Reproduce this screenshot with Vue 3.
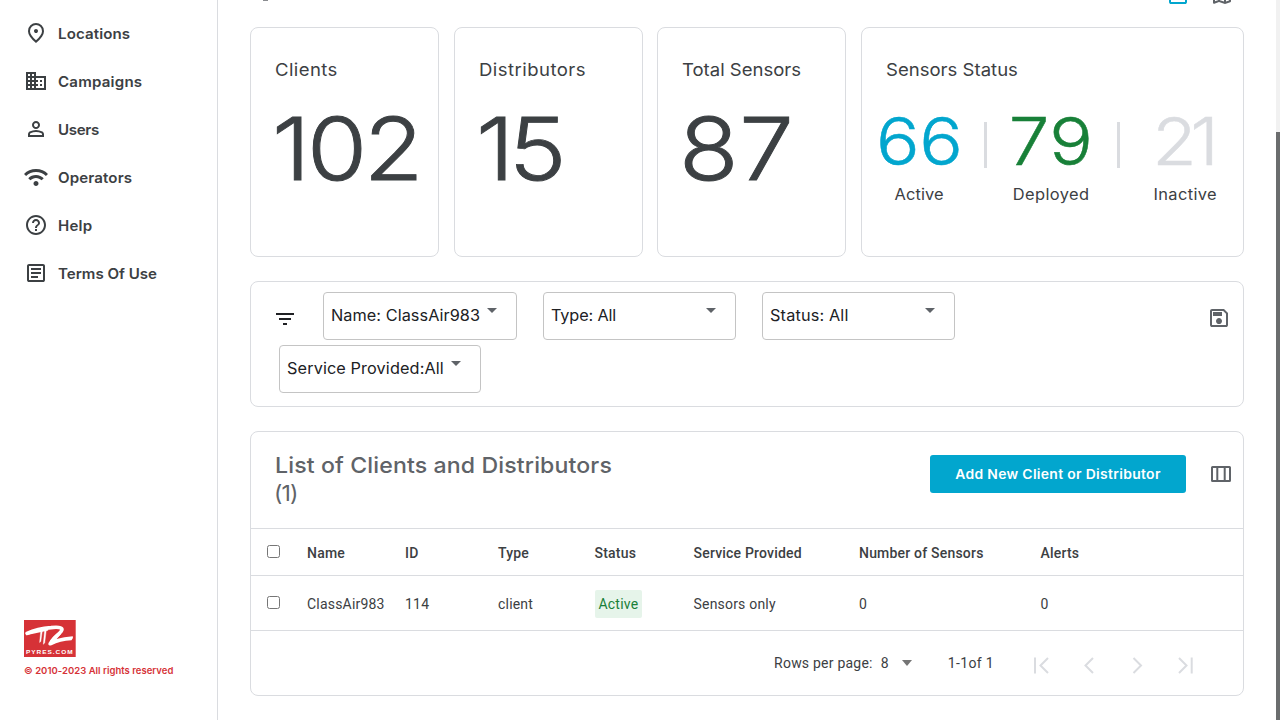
<script setup>
const nav = [
  { label: 'Locations', spacing: 0.1, icon: 'M12 12q.825 0 1.4-.6T14 10t-.6-1.4T12 8t-1.4.6T10 10t.6 1.4T12 12zm0 7.35q3.05-2.8 4.525-5.09T18 10.2q0-2.725-1.74-4.46T12 4 7.74 5.74 6 10.2q0 1.77 1.475 4.06T12 19.35zM12 22q-4.025-3.425-6.01-6.36T4 10.2q0-3.75 2.41-5.975T12 2t5.59 2.225T20 10.2q0 2.5-1.99 5.44T12 22z' },
  { label: 'Campaigns', spacing: 0.2, icon: 'M12 7V3H2v18h20V7H12zM6 19H4v-2h2v2zm0-4H4v-2h2v2zm0-4H4V9h2v2zm0-4H4V5h2v2zm4 12H8v-2h2v2zm0-4H8v-2h2v2zm0-4H8V9h2v2zm0-4H8V5h2v2zm10 12h-8v-2h2v-2h-2v-2h2v-2h-2V9h8v10zm-2-8h-2v2h2v-2zm0 4h-2v2h2v-2z' },
  { label: 'Users', spacing: -0.3, icon: 'M12 12q-1.65 0-2.825-1.175T8 8t1.175-2.825T12 4t2.825 1.175T16 8t-1.175 2.825T12 12zm-8 8v-2.8q0-.85.44-1.56t1.16-1.09q1.55-.775 3.15-1.16T12 13t3.25.39 3.15 1.16q.725.375 1.16 1.09T20 17.2V20H4zm2-2h12v-.8q0-.275-.14-.5t-.36-.35q-1.35-.675-2.725-1.01T12 15t-2.775.34T6.5 16.35q-.225.125-.36.35T6 17.2v.8zm6-8q.825 0 1.41-.59T14 8t-.59-1.41T12 6t-1.41.59T10 8t.59 1.41T12 10z' },
  { label: 'Operators', spacing: 0.12, icon: 'M12 21q-1.05 0-1.775-.725T9.5 18.5t.725-1.775T12 16t1.775.725.725 1.775-.725 1.775T12 21zm-5.65-5.65-2.1-2.15q1.475-1.475 3.46-2.34T12 10t4.29.875 3.46 2.375l-2.1 2.1q-1.1-1.1-2.55-1.725T12 13t-3.1.625-2.55 1.725zM2.1 11.1 0 9q2.3-2.35 5.375-3.675T12 4t6.625 1.325T24 9l-2.1 2.1q-1.925-1.925-4.46-3.01T12 7 6.56 8.09 2.1 11.1z' },
  { label: 'Help', spacing: 0.2, icon: 'M11 18h2v-2h-2v2zm1-16C6.48 2 2 6.48 2 12s4.48 10 10 10 10-4.48 10-10S17.52 2 12 2zm0 18c-4.41 0-8-3.59-8-8s3.59-8 8-8 8 3.59 8 8-3.59 8-8 8zm0-14c-2.21 0-4 1.79-4 4h2c0-1.1.9-2 2-2s2 .9 2 2c0 2-3 1.75-3 5h2c0-2.25 3-2.5 3-5 0-2.21-1.79-4-4-4z' },
  { label: 'Terms Of Use', spacing: 0, icon: 'M7 17h7v-2H7v2zm0-4h10v-2H7v2zm0-4h10V7H7v2zM5 21q-.825 0-1.41-.59T3 19V5q0-.825.59-1.41T5 3h14q.825 0 1.41.59T21 5v14q0 .825-.59 1.41T19 21H5zm0-2h14V5H5v14z' },
]
const totals = [
  { label: 'Clients', value: '102', labelSpacing: 0.36, spacing: -3 },
  { label: 'Distributors', value: '15', labelSpacing: 0.42, spacing: -5 },
  { label: 'Total Sensors', value: '87', labelSpacing: -0.02, spacing: 0.5 },
]
const statuses = [
  { label: 'Active', value: '66', kind: 'active', spacing: -0.5, labelSpacing: 0.1 },
  { label: 'Deployed', value: '79', kind: 'deployed', spacing: 0.5, labelSpacing: 0.35 },
  { label: 'Inactive', value: '21', kind: 'inactive', spacing: -6, labelSpacing: 0.35 },
]
const filters = [
  { label: 'Name: ClassAir983', spacing: 0.05, kind: 'by-name' },
  { label: 'Type: All', spacing: -0.15, kind: 'by-type' },
  { label: 'Status: All', spacing: 0.14, kind: 'by-status' },
  { label: 'Service Provided:All', spacing: 0.1, kind: 'by-service' },
]
const columns = ['Name', 'ID', 'Type', 'Status', 'Service Provided', 'Number of Sensors', 'Alerts']
const pager = [
  'M6 4.500v16M19 5 11.500 12.500 19 20',
  'M16 5 8.500 12.500 16 20',
  'M8.500 5 16 12.500 8.500 20',
  'M6 5 13.500 12.500 6 20M18.700 4.500v16',
]
const track = (n) => ({ letterSpacing: n + 'px' })
</script>

<template>
  <div class="app">
    <aside class="sidebar">
      <nav>
        <a v-for="n in nav" :key="n.label" class="nav-item">
          <svg viewBox="0 0 24 24"><path :d="n.icon" /></svg>
          <span :style="track(n.spacing)">{{ n.label }}</span>
        </a>
      </nav>
      <footer>
        <svg class="logo" viewBox="0 0 52 37">
          <rect width="51.700" height="37" fill="#d63237" />
          <path d="M3 13.300C9 10.600 19 8.200 27 7.600C33 7 38 7.200 38 9.400C38 12 31 16.500 28 21" fill="none" stroke="#fff" stroke-width="3.600" stroke-linecap="round" stroke-linejoin="round" />
          <path d="M2 14.300 24 9.600" stroke="#fff" stroke-width="2" />
          <path d="M16.800 10.500 15.600 22.500 16.800 21.500 18.400 10.500zM20.600 10 19.300 24.300 20.700 23 22.300 10z" fill="#fff" stroke="#fff" stroke-width=".4" />
          <path d="M24.500 23Q28 17 34.500 12.500L37 14 32.500 19Q40 16.600 48.800 16.200Q49.800 18.500 47.500 20.300Q36 21 27.500 25.200Q23.600 26.300 24.500 23z" fill="#fff" />
          <text x="2" y="34.400" textLength="47.500" lengthAdjust="spacingAndGlyphs" letter-spacing="0.800" font-family="Liberation Sans, sans-serif" font-weight="700" font-size="5.400" fill="#fff">PYRES.COM</text>
        </svg>
        <p>© 2010-2023 All rights reserved</p>
      </footer>
    </aside>

    <main>
      <header class="top">
        <i class="tail"></i>
        <div class="views">
          <svg viewBox="0 0 24 24" class="on"><path d="M5 21q-.825 0-1.400-.6T3 19V5q0-.8.600-1.400T5 3h14q.8 0 1.400.6T21 5v14q0 .8-.6 1.400T19 21H5zm0-2h14v-8H5v8z" /></svg>
          <svg viewBox="0 0 24 24"><path d="m15 21-6-2.100-4.650 1.800q-.5.200-.925-.11T3 19.750v-14q0-.325.190-.575t.51-.375L9 3l6 2.100 4.650-1.800q.5-.2.925.11T21 4.250v14q0 .325-.19.575t-.51.375L15 21zm-1-2.450V6.850l-4-1.400v11.700l4 1.400zm2 0 3-1V5.700l-3 1.150v11.700zM5 18.300l3-1.150V5.450l-3 1v11.850z" /></svg>
        </div>
      </header>

      <section class="cards">
        <article v-for="t in totals" :key="t.label" class="card">
          <h3 :style="track(t.labelSpacing)">{{ t.label }}</h3>
          <div class="total" :style="track(t.spacing)">{{ t.value }}</div>
        </article>
        <article class="card">
          <h3>Sensors Status</h3>
          <div class="statuses">
            <div v-for="s in statuses" :key="s.label" class="status" :class="s.kind">
              <b :style="track(s.spacing)">{{ s.value }}</b>
              <span :style="track(s.labelSpacing)">{{ s.label }}</span>
            </div>
          </div>
        </article>
      </section>

      <section class="panel filters">
        <div class="filter-list">
          <svg class="filter-icon" viewBox="0 0 24 24"><path d="M10 18h4v-2h-4v2zM3 6v2h18V6H3zm3 7h12v-2H6v2z" /></svg>
          <div v-for="f in filters" :key="f.label" class="select" :class="f.kind">
            <span :style="track(f.spacing)">{{ f.label }}</span>
            <i></i>
          </div>
        </div>
        <svg class="save" viewBox="0 0 24 24"><path d="M21 7v12q0 .825-.59 1.410T19 21H5q-.825 0-1.410-.59T3 19V5q0-.825.59-1.410T5 3h12l4 4zm-2 .85L16.150 5H5v14h14V7.850zM12 18q1.250 0 2.125-.875T15 15t-.875-2.125T12 12t-2.125.875T9 15t.875 2.125T12 18zM6 10h9V6H6v4z" /></svg>
      </section>

      <section class="panel list">
        <header>
          <h2><div>List of Clients and Distributors</div><div class="count">(1)</div></h2>
          <button><span>Add New Client or Distributor</span></button>
          <svg viewBox="0 0 24 24"><path d="M2 18.500V5.500Q2 4 3.500 4h17Q22 4 22 5.500v13Q22 20 20.500 20h-17Q2 20 2 18.500zM4 18h3.300V6H4zM9.300 18h5.400V6H9.300zM16.700 18H20V6h-3.300z" /></svg>
        </header>
        <div class="row head">
          <input type="checkbox" />
          <span v-for="c in columns" :key="c">{{ c }}</span>
        </div>
        <div class="row">
          <input type="checkbox" />
          <span>ClassAir983</span><span>114</span><span>client</span>
          <span><em>Active</em></span>
          <span>Sensors only</span><span>0</span><span>0</span>
        </div>
        <footer>
          <span>Rows per page:</span><span class="size">8</span><i></i>
          <span class="range">1-1of 1</span>
          <svg v-for="p in pager" :key="p" viewBox="0 0 24 24"><path :d="p" /></svg>
        </footer>
      </section>
    </main>
    <div class="scrollbar"><div></div></div>
  </div>
</template>

<style>
body { background: #fff; overflow: hidden; }
</style>

<style scoped>
* { box-sizing: border-box; margin: 0; }
.app { display: flex; width: 1280px; height: 720px; overflow: hidden; font-family: Inter, "Open Sans", sans-serif; color: #3c4043; }
svg { display: block; flex: none; fill: currentColor; }
h2, h3 { font-weight: 400; }

.sidebar { width: 218px; border-right: 1px solid #dadce0; display: flex; flex-direction: column; justify-content: space-between; padding: 9px 0 43px 24px; }
.nav-item { display: flex; align-items: center; height: 48px; gap: 10px; font-size: 14.5px; font-weight: 600; }
.nav-item svg { width: 24px; height: 24px; }
.nav-item span { transform: scaleX(1.04); transform-origin: left; }
.logo { width: 52px; height: 37px; }
.sidebar footer p { margin-top: 7px; font-size: 9.5px; line-height: 13px; font-weight: 600; letter-spacing: 0.03px; color: #d63237; white-space: nowrap; }

main { flex: 1; padding: 0 32px; }
.top { height: 27px; display: flex; justify-content: space-between; align-items: flex-start; }
.tail { width: 5px; height: 1px; margin-left: 13px; background: #8a8c90; }
.views { display: flex; gap: 20px; margin: -17px 10px 0 0; color: #5f6368; }
.views svg { width: 24px; height: 24px; }
.views .on { color: #02a6ce; }

.cards { display: grid; grid-template-columns: 189px 189px 189px 383px; justify-content: space-between; height: 230px; }
.card, .panel { border: 1px solid #dadce0; border-radius: 8px; }
.card { padding: 30px 0 0 24px; }
.card h3 { font-size: 17.5px; line-height: 24px; white-space: nowrap; transform: scaleX(1.06); transform-origin: left; }
.total { margin: 17px 0 0 -3px; font-size: 87px; line-height: 100px; font-weight: 300; -webkit-text-stroke: 0.9px currentColor; transform: scaleX(1.12); transform-origin: left; }
.statuses { display: flex; margin: 26px 0 0 -24px; }
.status { text-align: center; position: relative; }
.status.active { width: 115px; }
.status.deployed { width: 151px; }
.status.inactive { width: 117px; }
.status.deployed::before, .status.deployed::after { content: ""; position: absolute; top: 14px; width: 3px; height: 46px; background: #dadce0; }
.status.deployed::before { left: 8px; }
.status.deployed::after { right: 7px; }
.status b { display: block; font-size: 66px; line-height: 66px; font-weight: 300; -webkit-text-stroke: 0.5px currentColor; transform: scaleX(1.1); }
.status span { display: block; margin-top: 11px; font-size: 15.5px; line-height: 20px; transform: scaleX(1.06); }
.active b { color: #02a6ce; }
.deployed b { color: #188038; }
.inactive b { color: #dadce0; margin-left: -6px; }

.filters { margin-top: 24px; height: 126px; display: flex; justify-content: space-between; padding: 10px 12px 0 22px; }
.filter-list { display: flex; flex-wrap: wrap; width: 700px; align-content: flex-start; row-gap: 5px; color: #202124; }
.filter-icon { width: 24px; height: 24px; margin-top: 15px; }
.save { width: 24px; height: 24px; margin-top: 14px; color: #5f6368; }
.select { height: 48px; border: 1px solid #c4c4c4; border-radius: 4px; display: flex; justify-content: space-between; padding: 12px 19px 0 7px; font-size: 15.5px; line-height: 21px; white-space: nowrap; }
.select span { transform: scaleX(1.05); transform-origin: left; }
.select i { border: 5px solid transparent; border-top-color: #5f6368; border-bottom: 0; height: 5px; margin-top: 3px; }
.by-name { width: 194px; margin-left: 26px; }
.by-type, .by-status { width: 193px; margin-left: 26px; }
.by-service { width: 202px; margin-left: 6px; }

.list { margin-top: 24px; height: 265px; }
.list header { height: 96px; display: flex; padding: 19px 10px 0 24px; color: #5f6368; }
.list h2 { flex: 1; font-size: 22px; line-height: 28px; font-weight: 500; letter-spacing: 0.12px; white-space: nowrap; transform: scaleX(1.05); transform-origin: left; }
.list .count { letter-spacing: -0.8px; margin-left: -1px; font-weight: 400; }
.list button { width: 256px; height: 38px; margin: 4px 23px 0 0; padding: 0; border: 0; border-radius: 3px; background: #02a6ce; color: #fff; font: 600 13px/38px Inter, sans-serif; letter-spacing: 0.3px; }
.list button span { display: block; transform: scaleX(1.07); }
.list header svg { width: 24px; height: 24px; margin-top: 11px; }
.row { display: grid; grid-template-columns: 40px 98px 93px 96.5px 99px 165.5px 181.5px 1fr; align-items: center; height: 55px; border-bottom: 1px solid #dadce0; padding: 2px 0 0 16px; font: 400 14px/20px Roboto, sans-serif; letter-spacing: 0.2px; }
.row.head { height: 48px; border-top: 1px solid #dadce0; font-weight: 500; }
.row input { width: 13px; height: 13px; margin-top: -3px; }
.row em { display: inline-block; font-style: normal; color: #188038; background: #e6f4ea; border-radius: 2px; line-height: 28px; padding: 0 4px; }
.list footer { height: 63px; display: flex; align-items: center; font: 400 14px/20px Roboto, sans-serif; letter-spacing: 0.22px; justify-content: flex-end; padding-right: 46px; }
.list footer svg { width: 24px; height: 24px; fill: none; stroke: #dadce0; stroke-width: 2; margin: 4px 0 0 24px; }
.list footer i { border: 5px solid transparent; border-top: 6px solid #757575; border-bottom: 0; margin: 0 36px 0 13px; }
.size { margin-left: 8px; }
.range { letter-spacing: 0.35px; margin-right: 11px; }

.scrollbar { width: 4px; background: #f1f1f1; padding-top: 132px; }
.scrollbar div { height: 588px; background: #6b6d6e; }
</style>
